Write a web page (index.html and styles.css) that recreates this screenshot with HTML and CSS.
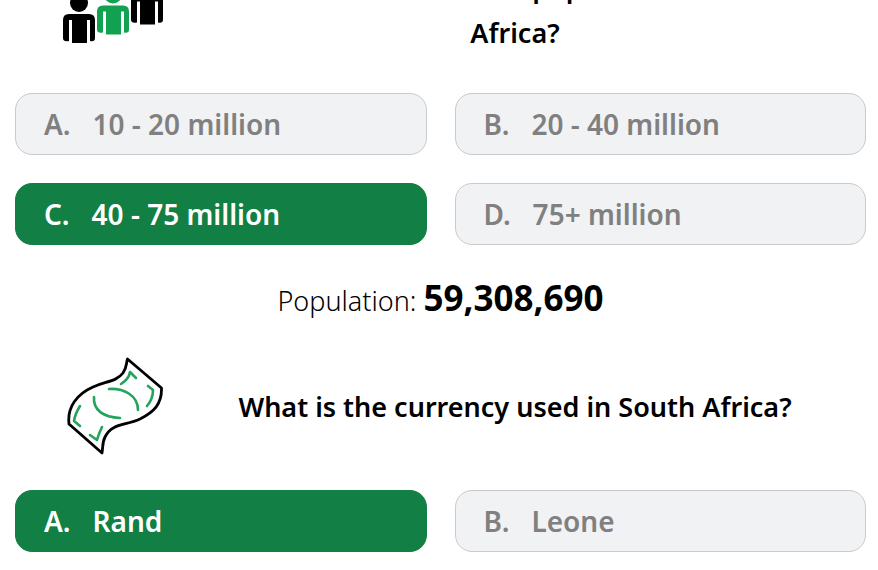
FILE: index.html
```html
<!DOCTYPE html>
<html lang="en">
<head>
<meta charset="utf-8">
<title>South Africa quiz</title>
<link rel="stylesheet" href="styles.css">
</head>
<body>
<main class="quiz">
  <section>
    <header class="question">
      <div class="question-icon">
        <svg viewBox="0 0 100 100" aria-hidden="true">
          <defs>
            <g id="person">
              <circle cx="16" cy="9" r="9"/>
              <path d="M6 20H26Q32 20 32 26V44Q32 48 27 47V26H24V49H9V26H6V47Q0 48 0 44V26Q0 20 6 20Z"/>
            </g>
          </defs>
          <use href="#person" x="0" y="34"/>
          <use href="#person" x="34" y="25.500" class="green-fill"/>
          <use href="#person" x="68" y="15.500"/>
        </svg>
      </div>
      <h2>What is the estimated population of South Africa?</h2>
    </header>
    <div class="answers">
      <button class="answer" type="button"><span>A.</span><span>10 - 20 million</span></button>
      <button class="answer" type="button"><span>B.</span><span>20 - 40 million</span></button>
      <button class="answer correct" type="button"><span>C.</span><span>40 - 75 million</span></button>
      <button class="answer" type="button"><span>D.</span><span>75+ million</span></button>
    </div>
    <p class="fact">Population: <strong>59,308,690</strong></p>
  </section>
  <section>
    <header class="question">
      <div class="question-icon">
        <svg viewBox="0 0 100 100" aria-hidden="true">
          <g class="note-outline">
            <path d="M64.500 2L98.500 31C99 47 91 55 77 62C62 69 49 66 42 80C39 86 40 91 39 96L6 67C4 50 14 37 30 30C43 24 53 25 60 16C64 10 63 7 64.500 2Z"/>
          </g>
          <g class="note-detail">
            <path d="M46 32C60 31 75 38 75 53M31 40C30 54 41 60 57 61"/>
            <path d="M58 27Q66 22 67 15L73 21M85 29L90 33Q90 42 84 49M17 49Q12 57 11 64L17 69M39 70Q36 76 34 83L27 78"/>
          </g>
        </svg>
      </div>
      <h2>What is the currency used in South Africa?</h2>
    </header>
    <div class="answers">
      <button class="answer correct" type="button"><span>A.</span><span>Rand</span></button>
      <button class="answer" type="button"><span>B.</span><span>Leone</span></button>
    </div>
  </section>
</main>
</body>
</html>
```
FILE: styles.css
```css
* {
  box-sizing: border-box;
}

body {
  margin: 0;
  overflow: hidden;
  background: #fff;
  color: #000;
  font-family: "Noto Sans", "Open Sans", sans-serif;
}

/* The list is scrolled so that the first question is partly out of view. */
.quiz {
  margin-top: -40px;
  padding: 0 12px 19px 15px;
}

.question {
  display: flex;
  align-items: center;
  min-height: 100px;
  padding-right: 47px;
  margin-bottom: 33px;
}

.question-icon {
  flex: 0 0 196px;
  display: flex;
  justify-content: center;
}

.question-icon svg {
  width: 100px;
  height: 100px;
}

.green-fill {
  fill: #12a150;
}

.note-outline,
.note-detail {
  fill: none;
  stroke: #000;
  stroke-width: 2.8;
  stroke-linecap: round;
  stroke-linejoin: round;
}

.note-detail {
  stroke: #22a45c;
  stroke-width: 2.6;
}

h2 {
  flex: 1;
  margin: 0;
  font-size: 27px;
  font-weight: 600;
  line-height: 46px;
  text-align: center;
}

.answers {
  display: grid;
  grid-template-columns: 1fr 1fr;
  gap: 28px;
}

.answer {
  display: flex;
  gap: 22px;
  padding: 12px 28px;
  border: 1px solid #c9cacd;
  border-radius: 17px;
  background: #f1f2f4;
  color: #808080;
  font-family: inherit;
  font-size: 28px;
  font-weight: 600;
  line-height: 36px;
  text-align: left;
}

.answer.correct {
  border-color: #128044;
  background: #128044;
  color: #fff;
}

.fact {
  margin: 26px 0 29px;
  font-size: 27px;
  font-weight: 300;
  line-height: 54px;
  text-align: center;
}

.fact strong {
  font-size: 35px;
  font-weight: 700;
}
```
